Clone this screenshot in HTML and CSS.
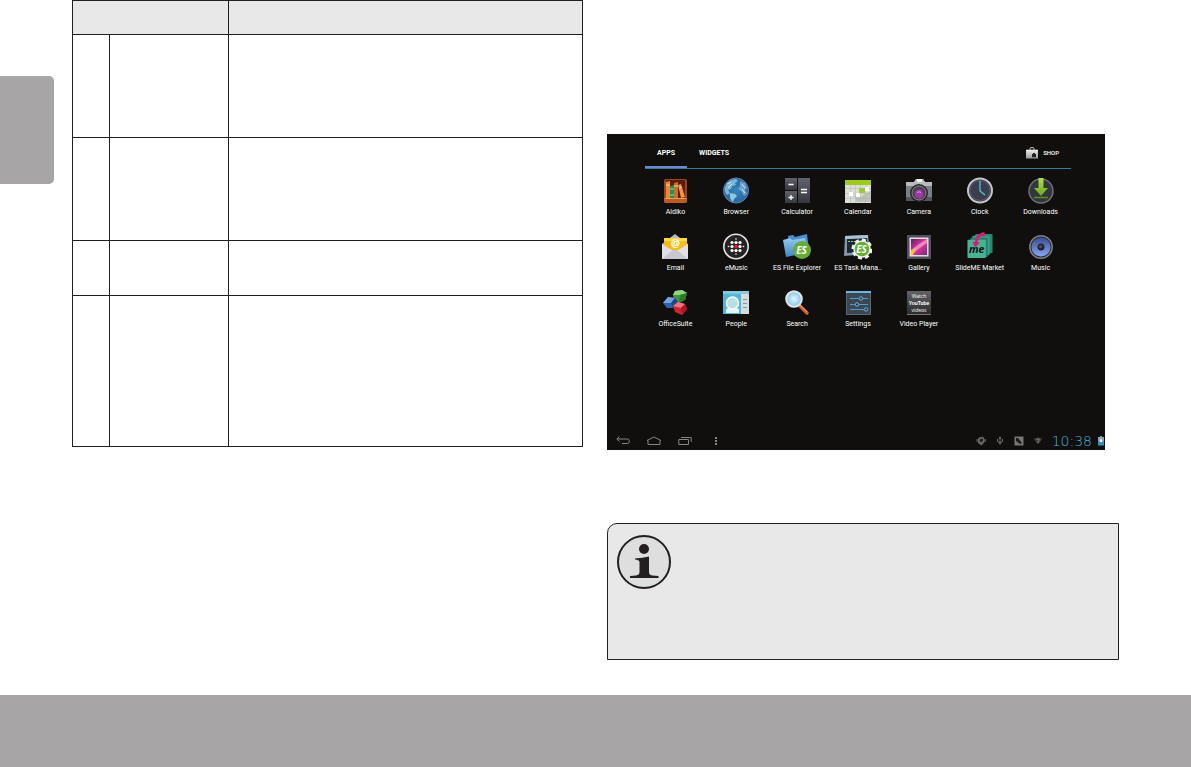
FILE: index.html
```html
<!DOCTYPE html>
<html lang="en">
<head>
    <meta charset="UTF-8">
    <meta name="viewport" content="width=device-width, initial-scale=1">
    <title>Apps</title>
    <link rel="stylesheet" href="styles.css">
</head>
<body>

    <main class="page">
        <div class="side-tab"></div>

        <table class="spec-table">
            <colgroup>
                <col class="col-number">
                <col class="col-name">
                <col>
            </colgroup>
            <thead>
                <tr class="row-head"><th colspan="2"></th><th></th></tr>
            </thead>
            <tbody>
                <tr class="row-medium"><td></td><td></td><td></td></tr>
                <tr class="row-medium"><td></td><td></td><td></td></tr>
                <tr class="row-small"><td></td><td></td><td></td></tr>
                <tr class="row-large"><td></td><td></td><td></td></tr>
            </tbody>
        </table>

        <div class="column">
            <section class="launcher">
                <header class="tabs">
                    <button class="tab active">APPS</button>
                    <button class="tab">WIDGETS</button>
                    <button class="shop">
                        <svg width="12" height="12" viewBox="0 0 12 12">
                            <path d="M4 3V1.5Q4 .6 5 .6H7Q8 .6 8 1.5V3" fill="none" stroke="#bbb"/>
                            <path d="M0 2.7H12V11.5H0Z" fill="url(#silver)"/>
                            <path d="M6 7H10V10.3H6ZM7 6H9V7H7Z" fill="#222"/>
                        </svg>
                        SHOP
                    </button>
                </header>

                <div class="apps">
                    <button class="app">
                        <svg viewBox="0 0 28 28">
                            <rect x="3" y="3" width="23" height="24" rx="2" fill="#a3431c"/>
                            <rect x="5" y="4" width="19" height="18" fill="#5b1d0d"/>
                            <path d="M5 6L9 5V22H5Z" fill="#e88a3c"/>
                            <path d="M9 10L13 9V22H9Z" fill="#2f8a55"/>
                            <path d="M13 7L17 6V22H13Z" fill="#c9702e"/>
                            <path d="M17 9L20 8L24 21L20 22Z" fill="#ef9344"/>
                            <path d="M5 9H9M13 10H17M18 12L21 11" stroke="#fbd08b"/>
                            <path d="M9 13H13M9 19H13" stroke="#a9d08a"/>
                            <path d="M3 22H26V25Q26 27 24 27H5Q3 27 3 25Z" fill="#bd5b26"/>
                            <path d="M4 22.5H25" stroke="#ed9d58"/>
                        </svg>
                        <span>Aldiko</span>
                    </button>
                    <button class="app">
                        <svg viewBox="0 0 28 28">
                            <circle cx="14" cy="14.5" r="12.5" fill="url(#globe)" stroke="#5c86b4"/>
                            <path d="M4 9Q8 3 14 3L16 5L13 7L14 9L10 10L9 13L6 14L8 17L5 19Q1 14 4 9Z" fill="#9fd2e8" opacity=".7"/>
                            <path d="M8 17L13 18L15 20L12 23L11 26Q8 24 8 20Z" fill="#a9dcec" opacity=".8"/>
                            <path d="M18 5L23 7L25 12L23 14L25 18L22 20L19 15L16 13L18 10Z" fill="#a5b9e4" opacity=".6"/>
                            <path d="M5 8L9 6M6 12L10 8M20 8L23 12M20 13L23 17" stroke="#e3f6fa" stroke-width=".8"/>
                        </svg>
                        <span>Browser</span>
                    </button>
                    <button class="app">
                        <svg viewBox="0 0 28 28">
                            <rect x="2" y="2" width="12" height="12" fill="url(#slate)"/>
                            <rect x="2" y="15" width="12" height="12" fill="url(#slate)"/>
                            <rect x="15" y="2" width="12" height="25" fill="url(#slate)"/>
                            <path d="M5.5 8.5H10.5M5.5 21.5H10.5M8 19V24M18 13.5H24M18 16.5H24" stroke="#fff" stroke-width="1.3"/>
                        </svg>
                        <span>Calculator</span>
                    </button>
                    <button class="app">
                        <svg viewBox="0 0 28 28">
                            <rect x="1" y="4" width="26" height="23" fill="#dcded8"/>
                            <rect x="1" y="4" width="26" height="5" fill="#9dcb1b"/>
                            <path d="M1 12.5H27M1 17.5H27M1 22.5H27M6.5 9V27M11.5 9V27M16.5 9V27M21.5 9V27" stroke="#bfc2bb" stroke-width=".7"/>
                            <path d="M7 19L12 22V26H27V15L22 17L17 21Z" fill="#a2a69e" opacity=".5"/>
                            <rect x="5" y="16" width="4" height="4" fill="#fff"/>
                            <rect x="12" y="17" width="4" height="4" fill="#fff"/>
                            <rect x="15" y="12" width="6" height="5" fill="#9bcb36"/>
                            <rect x="21" y="11" width="4" height="4" fill="#fff"/>
                        </svg>
                        <span>Calendar</span>
                    </button>
                    <button class="app">
                        <svg viewBox="0 0 28 28">
                            <path d="M1 6H9L11 3H18L20 6H27V25H1Z" fill="#7d7f84"/>
                            <path d="M1 6H9L11 3H18L20 6H27V10H1Z" fill="#b8babd"/>
                            <rect x="12" y="3" width="5" height="3" fill="#f4f4f4"/>
                            <path d="M1 21H27V25H1Z" fill="#55575c"/>
                            <circle cx="14" cy="17" r="9" fill="#27252b"/>
                            <circle cx="14" cy="17" r="7" fill="#4a3e50" stroke="#8d8791"/>
                            <circle cx="14" cy="18" r="4.5" fill="#9b3aa6"/>
                            <path d="M12 16.5Q14 15 16 16.5" fill="none" stroke="#dba5e2"/>
                        </svg>
                        <span>Camera</span>
                    </button>
                    <button class="app">
                        <svg viewBox="0 0 28 28">
                            <circle cx="14" cy="14.5" r="12" fill="#3c3d4e" stroke="#c5c5cc" stroke-width="2"/>
                            <circle cx="14" cy="14.5" r="10" fill="none" stroke="#666879" stroke-width=".7"/>
                            <path d="M14 5V15L19 19" fill="none" stroke="#58cbd5" stroke-width="1.2"/>
                        </svg>
                        <span>Clock</span>
                    </button>
                    <button class="app">
                        <svg viewBox="0 0 28 28">
                            <circle cx="14" cy="15" r="12" fill="#30363b" stroke="#6b7277" stroke-width="1.5"/>
                            <path d="M11.5 2H16.5V12H21L14 20L7 12H11.5Z" fill="url(#lime)"/>
                            <path d="M7 21.5H21" stroke="#5f8e1d" stroke-width="1.5"/>
                        </svg>
                        <span>Downloads</span>
                    </button>

                    <button class="app">
                        <svg viewBox="0 0 28 28">
                            <path d="M1 12L14 2L27 12V27H1Z" fill="#b9b9c0"/>
                            <path d="M3 6H26V20H3Z" fill="#f5bd18"/>
                            <path d="M3 6H26V9H3Z" fill="#ffd943"/>
                            <text x="14.5" y="15" class="glyph at-sign">@</text>
                            <path d="M1 12L14 20L27 12V27H1Z" fill="#e0e0e5"/>
                            <path d="M1 27L12 18H16L27 27Z" fill="#c8c8d0"/>
                        </svg>
                        <span>Email</span>
                    </button>
                    <button class="app">
                        <svg viewBox="0 0 28 28">
                            <circle cx="14" cy="14.5" r="12.2" fill="#252326" stroke="#e5e5e5" stroke-width="1.6"/>
                            <g fill="#fff">
                                <circle cx="10" cy="10.5" r="1.6"/><circle cx="14" cy="10.5" r="1.6"/><circle cx="18" cy="10.5" r="1.6"/>
                                <circle cx="10" cy="14.5" r="1.6"/><circle cx="18" cy="14.5" r="1.6"/>
                                <circle cx="10" cy="18.5" r="1.6"/><circle cx="14" cy="18.5" r="1.6"/><circle cx="18" cy="18.5" r="1.6"/>
                                <circle cx="14" cy="7" r=".8"/><circle cx="14" cy="22" r=".8"/><circle cx="6.5" cy="14.5" r=".8"/><circle cx="21.5" cy="14.5" r=".8"/>
                            </g>
                            <circle cx="14" cy="14.5" r="1.9" fill="#e31b23"/>
                        </svg>
                        <span>eMusic</span>
                    </button>
                    <button class="app">
                        <svg viewBox="0 0 28 28">
                            <path d="M5 4L10 3L12 5L24 2L26 19L7 22Z" fill="#4d90cd"/>
                            <path d="M0 8L7 6L9 8L22 6L24 21L3 25Z" fill="url(#folder)"/>
                            <circle cx="19" cy="18" r="9" fill="url(#green)"/>
                            <text x="18.5" y="22" class="glyph es">ES</text>
                        </svg>
                        <span>ES File Explorer</span>
                    </button>
                    <button class="app">
                        <svg viewBox="0 0 28 28">
                            <path d="M1 4L24 3L26 22L0 24Z" fill="#8299a9"/>
                            <path d="M3 7L23 6L24 20L3 21Z" fill="#1c2a2f"/>
                            <path d="M1 4L24 3V6L1 7Z" fill="#a9c4d6"/>
                            <path d="M4 9.5H11M13 9.5H16" stroke="#98c83b" stroke-dasharray="2 1"/>
                            <circle cx="18" cy="17" r="9" fill="none" stroke="#eef1ea" stroke-width="3" stroke-dasharray="4 3"/>
                            <circle cx="18" cy="17" r="8" fill="url(#green)" stroke="#eef1ea" stroke-width="1.5"/>
                            <text x="17.5" y="21" class="glyph es">ES</text>
                        </svg>
                        <span>ES Task Mana..</span>
                    </button>
                    <button class="app">
                        <svg viewBox="0 0 28 28">
                            <rect x="2" y="3" width="24" height="24" fill="#50505c"/>
                            <rect x="4.5" y="5.5" width="19" height="19" fill="#e2dce2"/>
                            <rect x="6" y="7" width="16" height="16" fill="url(#photo)"/>
                            <path d="M6 18L14 12L22 7V11L12 18L7 23H6Z" fill="#f6a8d3" opacity=".7"/>
                            <path d="M6 19L11 16L8 23H6Z" fill="#ffc42e"/>
                        </svg>
                        <span>Gallery</span>
                    </button>
                    <button class="app app-low">
                        <svg viewBox="0 0 28 28">
                            <rect x="9" y="2" width="18" height="20" rx="1" fill="#2b8570"/>
                            <rect x="6" y="4" width="18" height="20" rx="1" fill="#3aa086"/>
                            <rect x="4" y="6" width="18" height="20" rx="1" fill="#27806b"/>
                            <rect x="1" y="8" width="19" height="19" rx="1" fill="#46b393"/>
                            <text x="10.5" y="22" class="glyph me">me</text>
                            <path d="M18 2Q10 3 10 12" fill="none" stroke="#d51c78" stroke-width="3"/>
                            <path d="M6 10L14 11L9 16Z" fill="#d51c78"/>
                            <circle cx="17" cy="2.5" r="2.2" fill="#d51c78"/>
                        </svg>
                        <span>SlideME Market</span>
                    </button>
                    <button class="app">
                        <svg viewBox="0 0 28 28">
                            <circle cx="14" cy="15" r="11.2" fill="#2a2d3a" stroke="#7d7e84" stroke-width="1.5"/>
                            <circle cx="14" cy="15" r="9.5" fill="url(#cone)"/>
                            <circle cx="14" cy="15" r="3.5" fill="#23252f"/>
                            <circle cx="13.5" cy="14.5" r="1.5" fill="#4f5567"/>
                        </svg>
                        <span>Music</span>
                    </button>

                    <button class="app">
                        <svg viewBox="0 0 28 28">
                            <path d="M12 7L14 3L21 2L26 5L24 12L18 15L13 12Z" fill="#3f9a36"/>
                            <path d="M12 7L14 3L21 2L26 5L19 7Z" fill="#8fd67c"/>
                            <path d="M19 7L26 5L24 12L18 15Z" fill="#2c7a28"/>
                            <path d="M2 15L7 9L14 10L17 14L12 20L6 20Z" fill="#2b61ae"/>
                            <path d="M2 15L7 9L14 10L10 15Z" fill="#75a4dc"/>
                            <path d="M10 15L14 10L17 14L12 20Z" fill="#1d478c"/>
                            <path d="M12 18L17 14L24 16L26 21L21 27L14 24Z" fill="#cf2431"/>
                            <path d="M12 18L17 14L24 16L20 20Z" fill="#f27480"/>
                            <path d="M20 20L24 16L26 21L21 27Z" fill="#a91b28"/>
                        </svg>
                        <span>OfficeSuite</span>
                    </button>
                    <button class="app">
                        <svg viewBox="0 0 28 28">
                            <rect x="1" y="3" width="26" height="23" fill="#3c9cba"/>
                            <rect x="1" y="3" width="26" height="3" fill="#85c9dc"/>
                            <rect x="19" y="6" width="8" height="20" fill="#d4dcdf"/>
                            <rect x="1" y="6" width="18" height="20" fill="#54b6d1"/>
                            <path d="M21 11.5H25M21 15.5H25M21 19.5H25" stroke="#879aa2"/>
                            <path d="M4 25V22Q4 20 7 20H14Q17 20 17 22V25Z" fill="#e8f4f6"/>
                            <circle cx="10.5" cy="15" r="6" fill="#b9dfe7" stroke="#f6fcfd" stroke-width="1.5"/>
                        </svg>
                        <span>People</span>
                    </button>
                    <button class="app">
                        <svg viewBox="0 0 28 28">
                            <path d="M16 17L24 25" stroke="#cc6135" stroke-width="3.5" stroke-linecap="round"/>
                            <path d="M17 17L24 24" stroke="#f1a47b" stroke-width="1"/>
                            <circle cx="11" cy="11" r="7.8" fill="url(#lens)" stroke="#e2e5e8" stroke-width="2"/>
                        </svg>
                        <span>Search</span>
                    </button>
                    <button class="app">
                        <svg viewBox="0 0 28 28">
                            <rect x="2" y="3" width="25" height="24" fill="#3c4752"/>
                            <rect x="2" y="3" width="25" height="2" fill="#67b8dd"/>
                            <path d="M2.5 5V26.5H26.5V5" fill="none" stroke="#546979"/>
                            <path d="M6 10.5H24M6 16.5H24M6 21.5H24" stroke="#5299c9"/>
                            <g fill="#273746" stroke="#6fb7e4">
                                <circle cx="17" cy="10.5" r="1.7"/><circle cx="13" cy="16.5" r="1.7"/><circle cx="22" cy="21.5" r="1.7"/>
                            </g>
                        </svg>
                        <span>Settings</span>
                    </button>
                    <button class="app">
                        <svg viewBox="0 0 28 28">
                            <rect x="2" y="3" width="24" height="24" fill="url(#steel)"/>
                            <path d="M2 26.5H26" stroke="#777"/>
                            <text x="14" y="10" class="glyph tiny">Watch</text>
                            <text x="14" y="17" class="glyph tube">YouTube</text>
                            <text x="14" y="24" class="glyph tiny">videos</text>
                        </svg>
                        <span>Video Player</span>
                    </button>
                </div>

                <footer class="system-bar">
                    <button class="nav" aria-label="Back">
                        <svg width="14" height="10" viewBox="0 0 14 10"><path d="M3.5 .5L.8 3L3.5 5.5M1 3H11.5Q13.3 3 13.3 5Q13.3 7.5 11.5 7.5H6"/></svg>
                    </button>
                    <button class="nav" aria-label="Home">
                        <svg width="16" height="10" viewBox="0 0 16 10"><path d="M1 4.5L8 1L15 4.5H14V8.5H2V4.5Z"/></svg>
                    </button>
                    <button class="nav" aria-label="Recent apps">
                        <svg width="14" height="10" viewBox="0 0 14 10"><path d="M.8 3.5H10.5V8.5H.8ZM3 1.5H13.2V6"/></svg>
                    </button>
                    <button class="nav" aria-label="Menu">
                        <svg width="4" height="10" viewBox="0 0 4 10"><path class="dots" d="M1 1H3V3H1ZM1 4H3V6H1ZM1 7H3V9H1Z"/></svg>
                    </button>

                    <div class="status">
                        <svg width="10" height="10" viewBox="0 0 10 10">
                            <path d="M3 1.5L7 .8L8.5 3V6L5.5 9.5L2 7V3Z" fill="#6a6a6a"/>
                            <path d="M4 3L7 2.5V5L5 6.5L3.5 5Z" fill="#222"/>
                            <path d="M1 3V6M9.2 3V6" stroke="#6a6a6a"/>
                        </svg>
                        <svg width="10" height="10" viewBox="0 0 10 10">
                            <path d="M5 1V9M2.500 3V5.5L5 7L7.5 5.5V3" fill="none" stroke="#777"/>
                            <path d="M3.5 2.500L5 .5L6.5 2.500Z" fill="#777"/>
                        </svg>
                        <svg width="10" height="10" viewBox="0 0 10 10">
                            <path d="M.5 .5H9.5V9.5H.5Z" fill="#777"/>
                            <path d="M2 2H4L8 7L6 8L2 5Z" fill="#1b1b1b"/>
                        </svg>
                        <svg width="10" height="10" viewBox="0 0 10 10">
                            <path d="M.8 3Q5 0 9.2 3L5 8.5Z" fill="#3c3c3c"/>
                            <path d="M3.5 3.5Q5 2 6.5 3.5Q6.5 4.5 5 5.5V7" fill="none" stroke="#888"/>
                        </svg>
                        <time class="clock">10:38</time>
                        <svg class="battery" width="6" height="10" viewBox="0 0 6 10">
                            <path d="M2 0H4V1H6V6H0V1H2Z" fill="#8fa1a8"/>
                            <path d="M0 5H6V9.5H0Z" fill="#2f93bd"/>
                            <path d="M3 2L4.5 6H1.5Z" fill="#fff"/>
                        </svg>
                    </div>
                </footer>
            </section>

            <aside class="note">
                <svg width="56" height="56" viewBox="0 0 56 56" role="img" aria-label="Information">
                    <circle cx="28" cy="28" r="26" fill="#dedede" stroke="#231f20" stroke-width="2"/>
                    <circle cx="28" cy="15" r="5" fill="#231f20"/>
                    <path d="M19 24.5Q27 24 33 22.5V38Q33 41 36 41.5L42.5 42V44H14V42L20 41.5Q23.5 41 23.5 38V28Q23.5 26 19 25.5Z" fill="#231f20"/>
                </svg>
            </aside>
        </div>
    </main>

    <div class="page-footer"></div>

    <!-- gradients shared by the icons -->
    <svg class="defs" width="0" height="0">
        <defs>
            <linearGradient id="silver" x2="0" y2="1"><stop stop-color="#eee"/><stop offset="1" stop-color="#999"/></linearGradient>
            <linearGradient id="slate" x2="0" y2="1"><stop stop-color="#62626c"/><stop offset="1" stop-color="#363640"/></linearGradient>
            <linearGradient id="lime" x2="0" y2="1"><stop stop-color="#b3e04b"/><stop offset="1" stop-color="#69a81d"/></linearGradient>
            <linearGradient id="folder" x2="0" y2="1"><stop stop-color="#94c9f0"/><stop offset="1" stop-color="#4185c5"/></linearGradient>
            <linearGradient id="photo" x2="1" y2="1"><stop stop-color="#5b2366"/><stop offset=".5" stop-color="#e0349c"/><stop offset="1" stop-color="#792b80"/></linearGradient>
            <linearGradient id="steel" x2="0" y2="1"><stop stop-color="#626264"/><stop offset="1" stop-color="#29292b"/></linearGradient>
            <linearGradient id="cone" x2="0" y2="1"><stop stop-color="#3a4d94"/><stop offset="1" stop-color="#8aa6f4"/></linearGradient>
            <radialGradient id="globe"><stop stop-color="#2f86bf"/><stop offset="1" stop-color="#2b679c"/></radialGradient>
            <radialGradient id="green"><stop stop-color="#5fb72c"/><stop offset="1" stop-color="#68a83b"/></radialGradient>
            <radialGradient id="lens"><stop stop-color="#e8f8ff"/><stop offset="1" stop-color="#7fc3e6"/></radialGradient>
        </defs>
    </svg>

</body>
</html>
```

FILE: styles.css
```css
* {
    box-sizing: border-box;
}
body {
    margin: 0;
    min-height: 100vh;
    display: flex;
    flex-direction: column;
    background-color: #fff;
    font-family: Roboto, sans-serif;
}
button {
    border: 0;
    padding: 0;
    background: none;
    color: inherit;
    font-family: inherit;
    cursor: pointer;
}
svg {
    display: block;
}
.page {
    flex: 1;
    display: grid;
    grid-template-columns: 54px 529fr 536fr;
    align-items: start;
    padding-right: 72px;
}
.side-tab {
    height: 108px;
    margin-top: 76px;
    background-color: #a7a5a6;
    border-radius: 0 5px 5px 0;
}

/* table */
.spec-table {
    width: calc(100% - 18px);
    margin-left: 18px;
    border-collapse: collapse;
    table-layout: fixed;
}
.spec-table th, .spec-table td {
    border: 1px solid #231f20;
    padding: 0;
}
.spec-table th {
    background-color: #e8e8e8;
}
.col-number {
    width: 37px;
}
.col-name {
    width: 119px;
}
.row-head {
    height: 34px;
}
.row-medium {
    height: 103px;
}
.row-small {
    height: 55px;
}
.row-large {
    height: 151px;
}

/* tablet screen */
.column {
    padding: 134px 0 35px 24px;
}
.launcher {
    display: flex;
    flex-direction: column;
    margin-right: 14px;
    min-height: 316px;
    background-color: #100f0d;
    color: #fff;
}
.tabs {
    display: flex;
    height: 35px;
    margin: 0 34px 0 38px;
    border-bottom: 1px solid #2f8198;
}
.tab {
    padding: 6px 12px 0;
    border-bottom: 2px solid transparent;
    font-size: 7px;
    font-weight: bold;
}
.tab.active {
    border-bottom-color: #7088d0;
}
.shop {
    display: flex;
    align-items: center;
    gap: 5px;
    margin-left: auto;
    padding: 3px 12px 0 0;
    font-size: 6px;
    font-weight: 500;
}
.apps {
    display: grid;
    grid-template-columns: repeat(7, 1fr);
    row-gap: 14px;
    margin: 7px 34px 0 38px;
}
.app {
    display: flex;
    flex-direction: column;
    align-items: center;
    gap: 2px;
    height: 42px;
    font-size: 7px;
    line-height: 12px;
    white-space: nowrap;
}
.app-low {
    gap: 3px;
}
.app svg {
    width: 28px;
    height: 28px;
}
.glyph {
    fill: #fff;
    text-anchor: middle;
    font-family: "Open Sans", sans-serif;
    font-weight: bold;
}
.at-sign {
    font-size: 10px;
}
.es {
    font-size: 10px;
    font-style: italic;
}
.me {
    fill: #111;
    font-size: 11px;
    font-style: italic;
}
.tiny {
    font-size: 5px;
    font-weight: normal;
}
.tube {
    font-family: "Liberation Sans", sans-serif;
    font-size: 5px;
}

/* navigation and status icons */
.system-bar {
    display: flex;
    align-items: center;
    height: 18px;
    margin-top: auto;
}
.nav {
    display: flex;
    justify-content: center;
    width: 31px;
}
.nav path {
    fill: none;
    stroke: #858585;
}
.nav .dots {
    fill: #858585;
    stroke: none;
}
.status {
    display: flex;
    align-items: center;
    gap: 9px;
    margin-left: auto;
    padding-right: 1px;
}
.clock {
    color: #4bb0d8;
    font-family: "DejaVu Sans", sans-serif;
    font-size: 14px;
    font-weight: 200;
    line-height: 16px;
}
.battery {
    margin-left: -3px;
}

/* info box */
.note {
    min-height: 137px;
    margin-top: 73px;
    padding: 10px 8px;
    background-color: #e8e8e8;
    border: 1px solid #231f20;
    border-top-left-radius: 10px;
}
.page-footer {
    height: 72px;
    background-color: #a7a5a6;
}
```
